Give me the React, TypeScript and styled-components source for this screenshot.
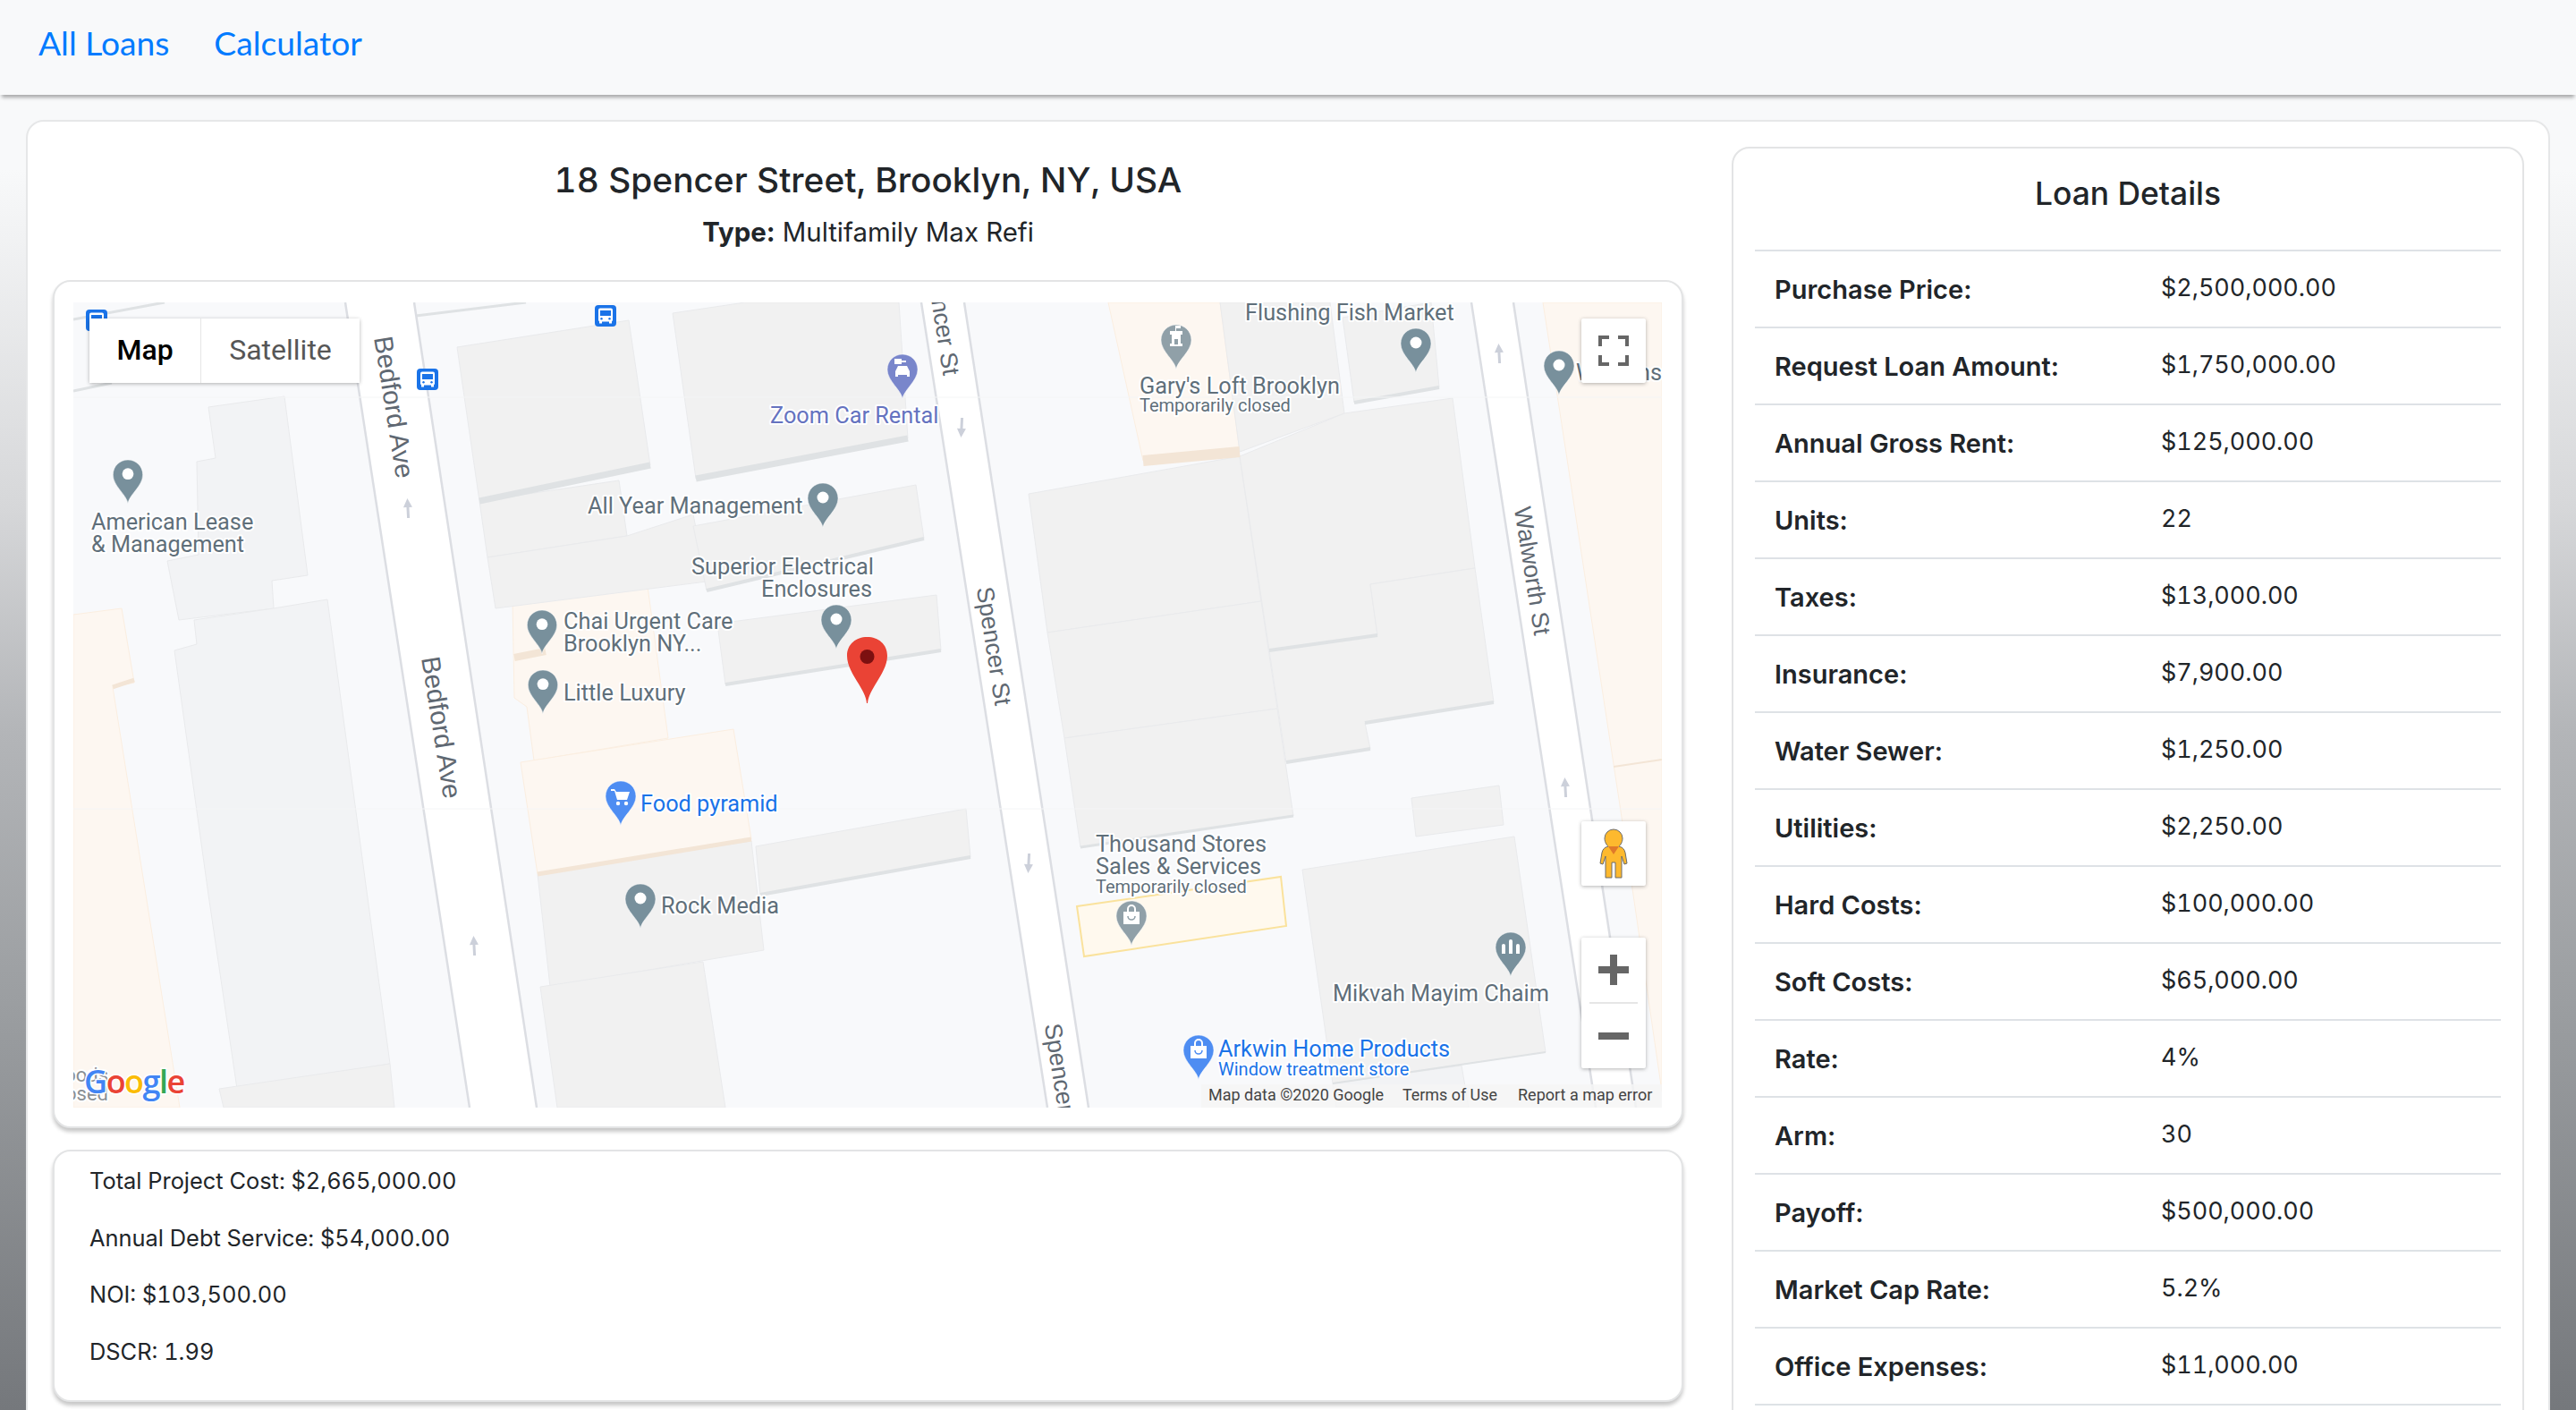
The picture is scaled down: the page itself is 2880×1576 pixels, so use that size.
import React from 'react';
import styled, { createGlobalStyle } from 'styled-components';

const GlobalStyle = createGlobalStyle`
  html, body { margin: 0; padding: 0; }
  body {
    font-family: Inter, "Liberation Sans", sans-serif;
    color: #212529;
    background: #f8f9fa;
  }
`;

const Page = styled.div`
  height: 1576px;
  overflow: hidden;
  background: linear-gradient(to bottom, #f8f9fa 0%, #f8f9fa 12%, #d6d7d9 36%, #b3b5b8 52%, #9a9da0 72%, #75787c 100%);
`;

const NavBar = styled.nav`
  height: 106px;
  box-sizing: border-box;
  display: flex;
  align-items: center;
  gap: 50px;
  padding: 0 43px 12px;
  background: #f8f9fa;
  box-shadow: 0 5px 4px -2px rgba(0, 0, 0, 0.32);
`;

const NavLink = styled.a`
  font-family: Lato, "Open Sans", sans-serif;
  font-size: 37.2px;
  color: #007bff;
`;

const OuterCard = styled.main`
  margin: 28px 29px 0;
  padding: 0 27px 0 28px;
  background: #fff;
  border: 2px solid #e6e7e8;
  border-radius: 20px;
  display: grid;
  grid-template-columns: 1823px 886px;
  justify-content: space-between;
  box-sizing: border-box;
  height: 1600px;
`;

const LeftColumn = styled.section`
  display: flex;
  flex-direction: column;
`;

const Title = styled.h1`
  margin: 41px 0 0;
  font-size: 38.8px;
  line-height: 48px;
  font-weight: 500;
  text-align: center;
  font-variant-numeric: tabular-nums;
`;

const TypeLine = styled.p`
  margin: 15px 0 0;
  font-size: 29.4px;
  line-height: 40px;
  text-align: center;
  strong { font-weight: 700; }
`;

const Panel = styled.div`
  background: #fff;
  border: 2px solid #e3e4e5;
  border-radius: 20px;
  box-sizing: border-box;
`;

const MapCard = styled(Panel)`
  margin-top: 33px;
  padding: 23px 22px 21px 21px;
  box-shadow: 0 4px 4px rgba(0, 0, 0, 0.22);
`;

const MapFrame = styled.div`
  position: relative;
  height: 900px;
  overflow: hidden;
  background: #f8f9fb;
`;

const MapSvg = styled.svg`
  display: block;
  width: 100%;
  height: 100%;
`;

const MapLabel = styled.text<{ $tone?: string; $size?: number; $weight?: number }>`
  font-family: Roboto, "Liberation Sans", sans-serif;
  font-size: ${(p) => p.$size ?? 25.3}px;
  font-weight: ${(p) => p.$weight ?? 400};
  fill: ${(p) => p.$tone ?? '#5f6f7a'};
  paint-order: stroke;
  stroke: #fff;
  stroke-width: 4px;
  stroke-linejoin: round;
`;

const StreetLabel = styled.text<{ $size?: number }>`
  font-family: "Liberation Sans", Arial, sans-serif;
  font-size: ${(p) => p.$size ?? 27}px;
  fill: #5f6872;
  text-anchor: middle;
  dominant-baseline: central;
`;

const Attribution = styled.text<{ $size?: number }>`
  font-family: Roboto, "Liberation Sans", sans-serif;
  font-size: ${(p) => p.$size ?? 18}px;
  fill: #444;
`;

const GoogleMark = styled.text`
  font-family: "Open Sans", Roboto, sans-serif;
  font-size: 36px;
  font-weight: 600;
  letter-spacing: -1.5px;
  paint-order: stroke;
  stroke: #fff;
  stroke-width: 3px;
`;

const ControlBox = styled.div`
  position: absolute;
  background: #fff;
  border-radius: 2px;
  box-shadow: 0 1px 4px rgba(0, 0, 0, 0.3);
`;

const MapTypeBox = styled(ControlBox)`
  left: 18px;
  top: 18px;
  width: 302px;
  height: 72px;
  display: flex;
`;

const MapTypeButton = styled.button<{ $active?: boolean }>`
  border: 0;
  padding: 0 0 3px;
  background: #fff;
  width: ${(p) => (p.$active ? '125px' : '177px')};
  font-family: Roboto, "Liberation Sans", sans-serif;
  font-size: 32px;
  font-weight: ${(p) => (p.$active ? 500 : 400)};
  color: ${(p) => (p.$active ? '#000' : '#565656')};
  border-right: ${(p) => (p.$active ? '1px solid #e6e6e6' : '0')};
`;

const SquareControl = styled(ControlBox)<{ $top: number }>`
  right: 18px;
  top: ${(p) => p.$top}px;
  width: 72px;
  height: 72px;
  display: grid;
  place-items: center;
`;

const ZoomBox = styled(ControlBox)`
  right: 18px;
  top: 710px;
  width: 72px;
  height: 146px;
  display: flex;
  flex-direction: column;
  align-items: center;
`;

const ZoomButton = styled.div`
  flex: 1;
  display: grid;
  place-items: center;
`;

const ZoomDivider = styled.div`
  width: 54px;
  height: 2px;
  background: #e6e6e6;
`;

const StatsCard = styled(Panel)`
  margin-top: 24px;
  height: 282px;
  padding: 15px 39px;
  box-shadow: 0 4px 4px rgba(0, 0, 0, 0.22);
`;

const StatLine = styled.p`
  margin: 0 0 27.5px;
  font-size: 25.4px;
  line-height: 36px;
  font-variant-numeric: tabular-nums;
`;

const DetailsCard = styled(Panel)`
  margin-top: 28px;
  padding: 0 24px;
  height: 1500px;
`;

const DetailsTitle = styled.h2`
  margin: 0;
  height: 113px;
  box-sizing: border-box;
  padding-bottom: 13px;
  display: flex;
  align-items: center;
  justify-content: center;
  font-size: 35.4px;
  font-weight: 500;
`;

const DetailsTable = styled.table`
  width: 100%;
  border-collapse: collapse;
`;

const DetailRow = styled.tr`
  height: 86px;
  border-top: 2px solid #dee2e6;
  &:last-child { border-bottom: 2px solid #dee2e6; }
`;

const DetailLabel = styled.th`
  width: 454px;
  box-sizing: border-box;
  padding: 0 0 0 22px;
  text-align: left;
  font-size: 29px;
  font-weight: 600;
  color: #212529;
`;

const DetailValue = styled.td`
  padding: 0 0 4px;
  font-size: 26.9px;
  font-weight: 400;
  font-variant-numeric: tabular-nums;
`;

const rows: [string, string][] = [
  ['Purchase Price:', '$2,500,000.00'],
  ['Request Loan Amount:', '$1,750,000.00'],
  ['Annual Gross Rent:', '$125,000.00'],
  ['Units:', '22'],
  ['Taxes:', '$13,000.00'],
  ['Insurance:', '$7,900.00'],
  ['Water Sewer:', '$1,250.00'],
  ['Utilities:', '$2,250.00'],
  ['Hard Costs:', '$100,000.00'],
  ['Soft Costs:', '$65,000.00'],
  ['Rate:', '4%'],
  ['Arm:', '30'],
  ['Payoff:', '$500,000.00'],
  ['Market Cap Rate:', '5.2%'],
  ['Office Expenses:', '$11,000.00'],
];

const GRAY = '#f1f1f1';
const COOL = '#f2f3f5';
const WARM = '#fdf7f1';
const BAND = '#dfe2e4';
const WARMBAND = '#f3e5d6';

const blocks: [string, string][] = [
  ['233,455 318,443 344,643 304,649 306,680 200,693 187,627 222,620 220,516 241,512', COOL],
  ['195,727 220,720 217,693 306,680 366,670 436,1189 265,1217 233,1000', COOL],
  ['245,1217 436,1189 441,1238 250,1238', GRAY],
  ['511,388 703,358 727,520 536,560', GRAY],
  ['752,350 833,338 1005,338 1015,490 778,535', GRAY],
  ['536,560 692,537 701,599 545,623', GRAY],
  ['545,623 701,599 775,575 790,650 554,680', GRAY],
  ['775,588 1024,542 1033,602 790,660', GRAY],
  ['802,697 1047,665 1052,727 811,765', GRAY],
  ['601,977 840,940 854,1062 615,1103', GRAY],
  ['845,946 1080,904 1085,958 850,1000', GRAY],
  ['604,1103 786,1075 811,1238 623,1238', GRAY],
  ['1150,552 1386,510 1410,672 1171,707', GRAY],
  ['1171,707 1410,672 1428,792 1190,825', GRAY],
  ['1190,825 1428,792 1446,912 1208,947', GRAY],
  ['1364,338 1487,338 1503,462 1386,505', GRAY],
  ['1501,355 1600,338 1609,433 1514,450', GRAY],
  ['1503,462 1624,445 1649,635 1532,653 1540,710 1419,727 1386,510', GRAY],
  ['1532,653 1649,635 1670,785 1526,808 1532,837 1438,852 1419,727 1540,710', GRAY],
  ['1578,892 1676,878 1681,922 1583,935', GRAY],
  ['1456,972 1693,935 1728,1176 1490,1211', GRAY],
  ['1490,1211 1634,1191 1642,1238 1494,1238', COOL],
];

const warmBlocks = [
  '82,687 136,680 150,763 126,768 201,1238 82,1238',
  '573,672 723,648 747,825 597,850 589,790 575,780',
  '582,852 820,815 840,938 601,977',
  '1239,338 1364,338 1386,505 1278,515',
  '1725,338 1858,338 1858,1220 1826,1000 1811,900 1750,500',
];

const bands: [number, number, number, number, string, number][] = [
  [536, 560, 727, 520, BAND, 7],
  [778, 535, 1015, 490, BAND, 7],
  [790, 660, 1033, 602, BAND, 4],
  [811, 765, 1052, 727, BAND, 4],
  [1208, 947, 1446, 912, BAND, 3],
  [850, 1000, 1085, 958, BAND, 4],
  [1419, 727, 1540, 710, BAND, 4],
  [1438, 852, 1532, 837, BAND, 4],
  [1526, 808, 1670, 785, BAND, 4],
  [1514, 450, 1609, 433, BAND, 4],
  [1490, 1211, 1728, 1176, BAND, 2],
  [601, 977, 840, 938, WARMBAND, 5],
  [1278, 515, 1386, 505, WARMBAND, 12],
  [575, 735, 610, 728, WARMBAND, 8],
  [1804, 857, 1858, 849, WARMBAND, 2],
  [126, 768, 150, 760, WARMBAND, 5],
  [82, 357, 184, 338, BAND, 3],
  [465, 353, 588, 338, BAND, 3],
  [82, 437, 125, 428, BAND, 3],
];

const roads: [number, number, number, number][] = [
  [386, 463, 525, 600],
  [1030, 1078, 1171, 1217],
  [1645, 1692, 1784, 1829],
];

type Glyph = 'dot' | 'car' | 'cart' | 'bag' | 'castle' | 'temple';

const Pin = ({ x, top, tip, color, glyph = 'dot' }: { x: number; top: number; tip: number; color: string; glyph?: Glyph }) => {
  const h = tip - top;
  return (
    <g transform={`translate(${x} ${top}) scale(${h / 50})`}>
      <path d="M0 50C-1 40-17 30-17 17C-17 7-9 0 0 0C9 0 17 7 17 17C17 30 1 40 0 50Z" fill={color} stroke="#fff" strokeOpacity=".5" strokeWidth="1" />
      {glyph === 'dot' && <circle cx="0" cy="16" r="6.5" fill="#fff" />}
      {glyph === 'car' && (
        <g fill="#fff">
          <path d="M-9 5h8v2h5v2h-5v2h-8z" />
          <path d="M-8 25v-6l3-6h10l3 6v6h-3v-2h-10v2z" />
        </g>
      )}
      {glyph === 'cart' && (
        <g fill="#fff">
          <path d="M-11 9h4l2 3h15l-3 9H-4l-3-10h-4z" />
          <circle cx="-3" cy="25" r="2.2" />
          <circle cx="6" cy="25" r="2.2" />
        </g>
      )}
      {glyph === 'bag' && (
        <g>
          <path d="M-9 12h18v14H-9z" fill="#fff" />
          <path d="M-4 12v-3a4 4 0 0 1 8 0v3" fill="none" stroke="#fff" strokeWidth="2" />
          <path d="M-4 17a4 4 0 0 0 8 0" fill="none" stroke={color} strokeWidth="1.6" />
        </g>
      )}
      {glyph === 'castle' && (
        <g fill="#fff">
          <path d="M-7 24v-3h2V11h-2V7h14v4h-2v10h2v3z" />
          <rect x="-2" y="16" width="4" height="6" fill={color} />
          <path d="M-1 1h1v6h-1zM0 1h5v3H0z" />
        </g>
      )}
      {glyph === 'temple' && (
        <g fill="#fff">
          <path d="M-2 10a2 2 0 0 1 4 0v14h-4z" />
          <path d="M-10 15a2 2 0 0 1 4 0v9h-4z" />
          <path d="M6 15a2 2 0 0 1 4 0v9H6z" />
        </g>
      )}
    </g>
  );
};

const Arrow = ({ x, y, down }: { x: number; y: number; down?: boolean }) => (
  <g transform={`translate(${x} ${y}) rotate(${down ? 183 : -3})`}>
    <path d="M0-11L5-1H1.500V11H-1.500V-1H-5Z" fill="#ccd0da" />
  </g>
);

const Bus = ({ x, y }: { x: number; y: number }) => (
  <g transform={`translate(${x - 12} ${y - 12})`}>
    <rect width="24" height="24" rx="4" fill="#1a73e8" />
    <rect x="4" y="3.500" width="16" height="15" rx="2" fill="#fff" />
    <rect x="6" y="6" width="12" height="6" fill="#1a73e8" />
    <rect x="5" y="18" width="3" height="2.500" fill="#fff" />
    <rect x="16" y="18" width="3" height="2.500" fill="#fff" />
    <circle cx="7.500" cy="15.200" r="1.200" fill="#1a73e8" />
    <circle cx="16.500" cy="15.200" r="1.200" fill="#1a73e8" />
  </g>
);

const BLUE = '#1a73e8';
const TEAL = '#78909c';
const SLATE = '#90a0a8';
const PINBLUE = '#4e8df2';
const PURPLE = '#7986cb';

const MapDrawing = () => (
  <MapSvg viewBox="82 338 1776 900" preserveAspectRatio="none">
    <rect x="82" y="338" width="1776" height="900" fill="#f8f9fb" />
    {warmBlocks.map((p) => (
      <polygon key={p} points={p} fill={WARM} stroke="#fbeee0" strokeWidth="1" />
    ))}
    {blocks.map(([p, c]) => (
      <polygon key={p} points={p} fill={c} stroke="#e9eaec" strokeWidth="1" />
    ))}
    <polygon points="1204,1013 1432,980 1438,1035 1212,1069" fill="#fff9ee" stroke="#fae29c" strokeWidth="2" />
    {bands.map(([a, b, c, d, col, w]) => (
      <line key={`${a}-${b}`} x1={a} y1={b} x2={c} y2={d} stroke={col} strokeWidth={w} />
    ))}
    {roads.map(([a, b, c, d]) => (
      <g key={a}>
        <polygon points={`${a},338 ${b},338 ${d},1238 ${c},1238`} fill="#fff" />
        <line x1={a} y1={338} x2={c} y2={1238} stroke="#dcdee3" strokeWidth="2.500" />
        <line x1={b} y1={338} x2={d} y2={1238} stroke="#dcdee3" strokeWidth="2.500" />
      </g>
    ))}
    <line x1="82" y1="444" x2="1858" y2="444" stroke="#f4f5f6" strokeWidth="1" />
    <line x1="82" y1="904" x2="1858" y2="904" stroke="#f4f5f6" strokeWidth="1" />

    <Arrow x={456} y={568} />
    <Arrow x={530} y={1057} />
    <Arrow x={1075} y={478} down />
    <Arrow x={1150} y={965} down />
    <Arrow x={1676} y={395} />
    <Arrow x={1750} y={880} />

    <Bus x={108} y={358} />
    <Bus x={677} y={353} />
    <Bus x={478} y={424} />

    <StreetLabel $size={29.5} transform="translate(441 455) rotate(81)">Bedford Ave</StreetLabel>
    <StreetLabel $size={29.5} transform="translate(494 813) rotate(81)">Bedford Ave</StreetLabel>
    <StreetLabel transform="translate(1053 353) rotate(81)">Spencer St</StreetLabel>
    <StreetLabel transform="translate(1111 722) rotate(81)">Spencer St</StreetLabel>
    <StreetLabel transform="translate(1713 638) rotate(81)">Walworth St</StreetLabel>
    <StreetLabel transform="translate(1187 1210) rotate(81)">Spencer St</StreetLabel>

    <MapLabel x="1858" y="425" textAnchor="end">Williams</MapLabel>
    <MapLabel x="861" y="473" $tone="#6573c0">Zoom Car Rental</MapLabel>
    <MapLabel x="1392" y="358">Flushing Fish Market</MapLabel>
    <MapLabel x="1274" y="440">Gary's Loft Brooklyn</MapLabel>
    <MapLabel x="1274" y="460" $size={20}>Temporarily closed</MapLabel>
    <MapLabel x="102" y="592">American Lease</MapLabel>
    <MapLabel x="102" y="617">&amp; Management</MapLabel>
    <MapLabel x="657" y="574">All Year Management</MapLabel>
    <MapLabel x="773" y="642">Superior Electrical</MapLabel>
    <MapLabel x="975" y="667" textAnchor="end">Enclosures</MapLabel>
    <MapLabel x="630" y="703">Chai Urgent Care</MapLabel>
    <MapLabel x="630" y="728">Brooklyn NY...</MapLabel>
    <MapLabel x="630" y="783">Little Luxury</MapLabel>
    <MapLabel x="716" y="907" $tone={BLUE}>Food pyramid</MapLabel>
    <MapLabel x="739" y="1021">Rock Media</MapLabel>
    <MapLabel x="1225" y="952">Thousand Stores</MapLabel>
    <MapLabel x="1225" y="977">Sales &amp; Services</MapLabel>
    <MapLabel x="1225" y="998" $size={20}>Temporarily closed</MapLabel>
    <MapLabel x="1490" y="1119">Mikvah Mayim Chaim</MapLabel>
    <MapLabel x="1362" y="1181" $tone={BLUE}>Arkwin Home Products</MapLabel>
    <MapLabel x="1362" y="1202" $tone={BLUE} $size={20}>Window treatment store</MapLabel>

    <Pin x={143} top={514} tip={563} color={TEAL} />
    <Pin x={920} top={540} tip={590} color={TEAL} />
    <Pin x={606} top={682} tip={731} color={TEAL} />
    <Pin x={607} top={749} tip={798} color={TEAL} />
    <Pin x={935} top={676} tip={726} color={TEAL} />
    <Pin x={716} top={988} tip={1038} color={TEAL} />
    <Pin x={1583} top={367} tip={417} color={TEAL} />
    <Pin x={1743} top={392} tip={442} color={TEAL} />
    <Pin x={1315} top={363} tip={413} color={SLATE} glyph="castle" />
    <Pin x={1009} top={396} tip={446} color={PURPLE} glyph="car" />
    <Pin x={694} top={873} tip={923} color={PINBLUE} glyph="cart" />
    <Pin x={1265} top={1007} tip={1057} color={SLATE} glyph="bag" />
    <Pin x={1340} top={1157} tip={1207} color={PINBLUE} glyph="bag" />
    <Pin x={1689} top={1042} tip={1092} color={TEAL} glyph="temple" />

    <g>
      <path d="M969 786C968 770 947 752 947 733C947 720 957 712 969.500 712C982 712 992 720 992 733C992 752 971 770 970 786Z" fill="#ea4335" />
      <ellipse cx="969.500" cy="734" rx="8" ry="8" fill="#7c1010" />
    </g>

    <rect x="1343" y="1212" width="515" height="26" fill="#f5f5f5" fillOpacity=".8" />
    <Attribution x="1351" y="1230">Map data ©2020 Google</Attribution>
    <Attribution x="1568" y="1230" $size={17.9}>Terms of Use</Attribution>
    <Attribution x="1697" y="1230">Report a map error</Attribution>

    <MapLabel x="121" y="1209" textAnchor="end" $size={22} $tone="#8a8f94">Goods</MapLabel>
    <MapLabel x="121" y="1230" textAnchor="end" $size={22} $tone="#8a8f94">closed</MapLabel>
    <GoogleMark x="94" y="1222">
      <tspan fill="#4285f4">G</tspan>
      <tspan fill="#ea4335">o</tspan>
      <tspan fill="#fbbc05">o</tspan>
      <tspan fill="#4285f4">g</tspan>
      <tspan fill="#34a853">l</tspan>
      <tspan fill="#ea4335">e</tspan>
    </GoogleMark>
  </MapSvg>
);

export default function App() {
  return (
    <Page>
      <GlobalStyle />
      <NavBar>
        <NavLink>All Loans</NavLink>
        <NavLink>Calculator</NavLink>
      </NavBar>
      <OuterCard>
        <LeftColumn>
          <Title>18 Spencer Street, Brooklyn, NY, USA</Title>
          <TypeLine>
            <strong>Type:</strong> Multifamily Max Refi
          </TypeLine>
          <MapCard>
            <MapFrame>
              <MapDrawing />
              <MapTypeBox>
                <MapTypeButton $active>Map</MapTypeButton>
                <MapTypeButton>Satellite</MapTypeButton>
              </MapTypeBox>
              <SquareControl $top={18}>
                <svg width="34" height="34" viewBox="0 0 34 34" fill="none" stroke="#666" strokeWidth="4">
                  <path d="M2 12V2h10M22 2h10v10M32 22v10H22M12 32H2V22" />
                </svg>
              </SquareControl>
              <SquareControl $top={580}>
                <svg width="32" height="56" viewBox="0 0 32 56">
                  <path d="M16 1a10 10 0 0 1 10 10c0 5-3 8-4 9 4 1 6 3 7 7l2 12-3 1-3-9v24h-7V38h-4v17H7V31l-3 9-3-1 2-12c1-4 3-6 7-7-1-1-4-4-4-9A10 10 0 0 1 16 1z" fill="#fdb92e" stroke="#6b6b6b" strokeWidth="1" />
                  <path d="M10 20h12l-6 9z" fill="#e07a2a" />
                </svg>
              </SquareControl>
              <ZoomBox>
                <ZoomButton>
                  <svg width="34" height="34" viewBox="0 0 34 34" fill="#666">
                    <path d="M13 0h8v13h13v8H21v13h-8V21H0v-8h13z" />
                  </svg>
                </ZoomButton>
                <ZoomDivider />
                <ZoomButton>
                  <svg width="34" height="8" viewBox="0 0 34 8" fill="#666">
                    <rect width="34" height="8" />
                  </svg>
                </ZoomButton>
              </ZoomBox>
            </MapFrame>
          </MapCard>
          <StatsCard>
            <StatLine>Total Project Cost: $2,665,000.00</StatLine>
            <StatLine>Annual Debt Service: $54,000.00</StatLine>
            <StatLine>NOI: $103,500.00</StatLine>
            <StatLine>DSCR: 1.99</StatLine>
          </StatsCard>
        </LeftColumn>
        <DetailsCard>
          <DetailsTitle>Loan Details</DetailsTitle>
          <DetailsTable>
            <tbody>
              {rows.map(([label, value]) => (
                <DetailRow key={label}>
                  <DetailLabel>{label}</DetailLabel>
                  <DetailValue>{value}</DetailValue>
                </DetailRow>
              ))}
            </tbody>
          </DetailsTable>
        </DetailsCard>
      </OuterCard>
    </Page>
  );
}
